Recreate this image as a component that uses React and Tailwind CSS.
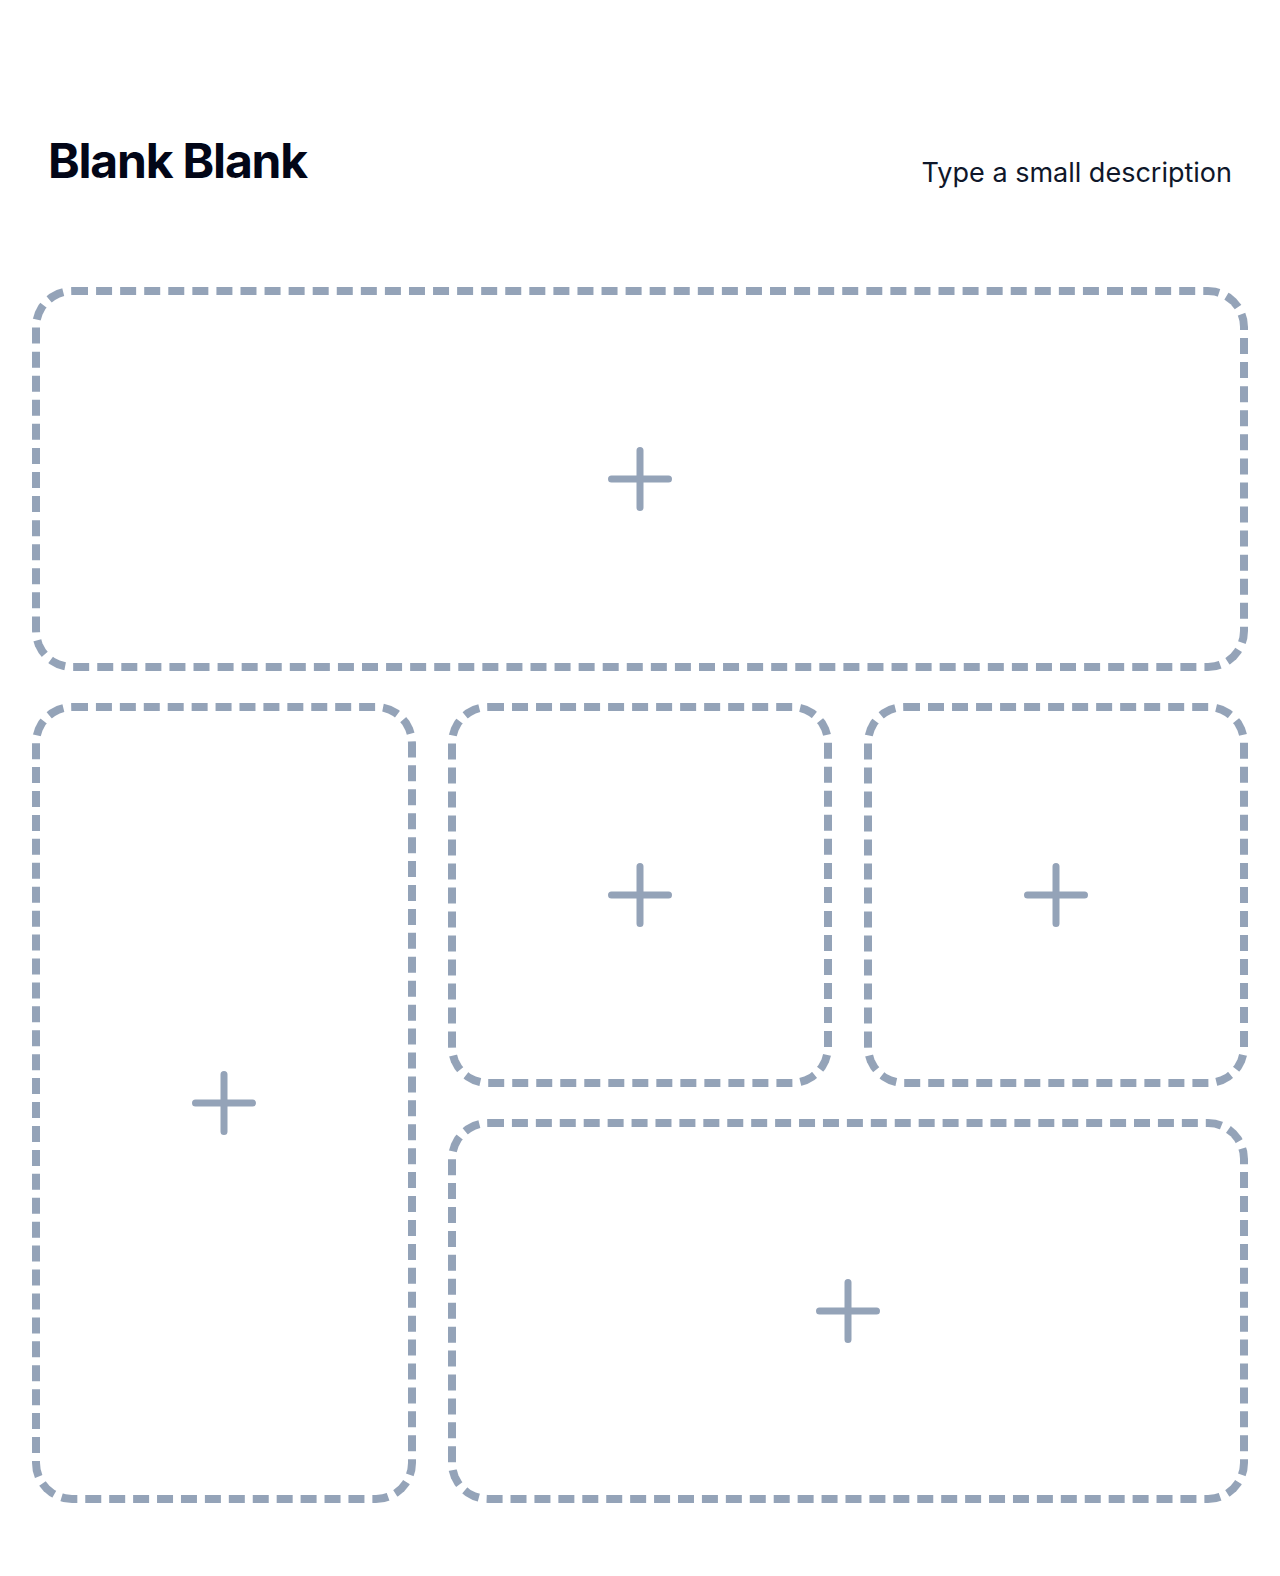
import React from 'react';

const PlusIcon = () => (
  <svg width="64" height="64" viewBox="0 0 64 64" fill="none" className="text-[rgb(148,163,184)]">
    <path d="M3.5 32h57M32 3.5v57" stroke="currentColor" strokeWidth="7" strokeLinecap="round" />
  </svg>
);

const Slot = ({ className }) => (
  <button
    className={`flex items-center justify-center border-8 border-dashed border-[rgb(148,163,184)] rounded-[40px] bg-white ${className}`}
  >
    <PlusIcon />
  </button>
);

const App = () => {
  return (
    <div className="min-h-screen bg-white text-[rgb(2,6,23)] font-['Inter','Liberation_Sans',sans-serif] pb-[72px]">
      {/* Header */}
      <div className="flex justify-between items-start px-12 pt-[137px]">
        <h1 className="text-5xl font-bold tracking-tight">Blank Blank</h1>
        <p className="text-[27px] leading-9 text-[rgb(15,23,42)] mt-[18px]">Type a small description</p>
      </div>

      {/* Slots grid */}
      <div className="grid grid-cols-3 auto-rows-[384px] gap-8 px-8 mt-[96px]">
        <Slot className="col-span-3" />
        <Slot className="row-span-2" />
        <Slot />
        <Slot />
        <Slot className="col-span-2" />
      </div>
    </div>
  );
};

export default App;
